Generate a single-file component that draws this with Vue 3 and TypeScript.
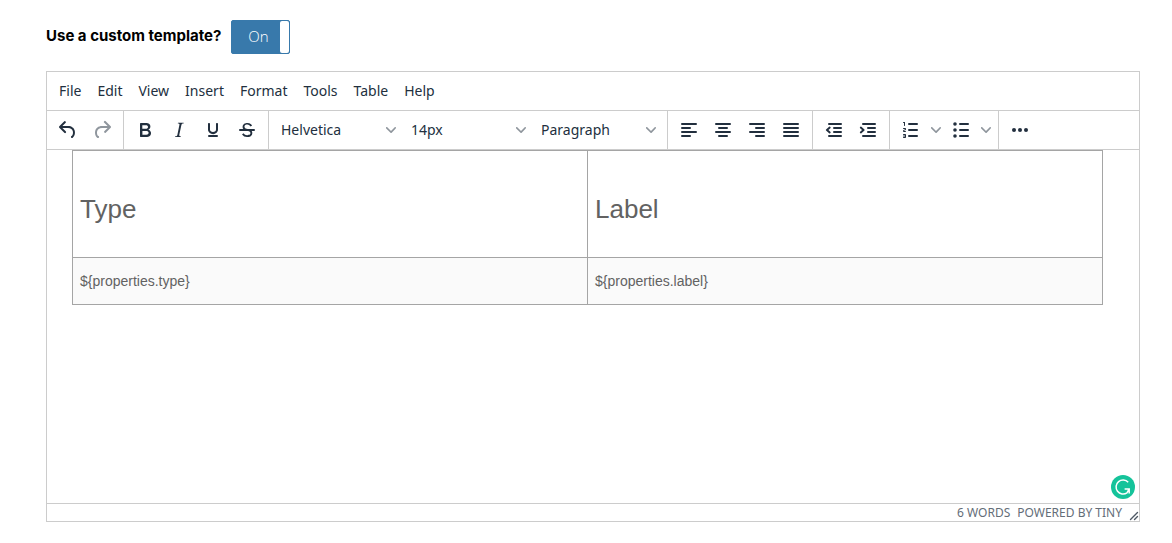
<script setup lang="ts">
import { ref } from 'vue'

interface Tool { name: string; paths: string[]; disabled?: boolean; split?: boolean }
interface Choice { name: string; options: string[] }
interface Group { name: string; tools?: Tool[]; choices?: Choice[] }

const enabled = ref(true)
const menus = ['File', 'Edit', 'View', 'Insert', 'Format', 'Tools', 'Table', 'Help']
const chevron = 'M8.7 2.2c.3-.3.8-.3 1 0 .4.4.4.9 0 1.2L5.7 7.8c-.3.3-.9.3-1.2 0L.2 3.4a.8.8 0 010-1.2c.3-.3.8-.3 1.1 0L5 6l3.7-3.8z'

const bar = (x: number, y: number, w: number) =>
  `M${x + 1} ${y}h${w - 2}a1 1 0 010 2H${x + 1}a1 1 0 010-2z`
const dot = (x: number, y: number, r: number) =>
  `M${x - r} ${y}a${r} ${r} 0 10${2 * r} 0a${r} ${r} 0 10-${2 * r} 0z`

const groups: Group[] = [
  {
    name: 'History',
    tools: [
      { name: 'Undo', paths: ['M6.4 8H12c3.7 0 6.2 2 6.8 5.1.6 2.7-.4 5.6-2.3 6.8a1 1 0 01-1-1.8c1.1-.6 1.8-2.7 1.4-4.6-.5-2.1-2.1-3.5-4.9-3.5H6.4l3.3 3.3a1 1 0 11-1.4 1.4l-5-5a1 1 0 010-1.4l5-5a1 1 0 011.4 1.4L6.4 8z'] },
      { name: 'Redo', disabled: true, paths: ['M17.6 10H12c-2.8 0-4.4 1.4-4.9 3.5-.4 2 .3 4 1.4 4.6a1 1 0 11-1 1.8c-2-1.2-2.9-4.1-2.3-6.8.6-3 3-5.1 6.8-5.1h5.6l-3.3-3.3a1 1 0 111.4-1.4l5 5a1 1 0 010 1.4l-5 5a1 1 0 01-1.4-1.4l3.3-3.3z'] },
    ],
  },
  {
    name: 'Formatting',
    tools: [
      { name: 'Bold', paths: ['M7.8 19c-.3 0-.5 0-.6-.2l-.2-.5V5.7c0-.2 0-.4.2-.5l.6-.2h5c1.5 0 2.7.3 3.5 1 .7.6 1.1 1.4 1.1 2.5a3 3 0 01-.6 1.9c-.4.6-1 1-1.6 1.2.4.1.9.3 1.3.6s.8.7 1 1.2c.4.4.5 1 .5 1.6 0 1.3-.4 2.3-1.3 3-.8.7-2.1 1-3.8 1H7.8zm5-8.3c.6 0 1.2-.1 1.6-.5.4-.3.6-.7.6-1.3 0-1.1-.8-1.7-2.3-1.7H9.3v3.5h3.4zm.5 6c.7 0 1.3-.1 1.7-.4.4-.4.6-.9.6-1.5s-.2-1-.7-1.4c-.4-.3-1-.4-2-.4H9.4v3.8h4z'] },
      { name: 'Italic', paths: ['M16.7 4.7l-.1.9h-.3c-.6 0-1 0-1.4.3-.3.3-.4.6-.5 1.1l-2.1 9.8v.6c0 .5.4.8 1.4.8h.2l-.2.8H8l.2-.8h.2c1.1 0 1.8-.5 2-1.5l2-9.8.1-.5c0-.6-.4-.8-1.4-.8h-.3l.2-.9h5.8z'] },
      { name: 'Underline', paths: ['M16 5c.6 0 1 .4 1 1v5.5a4 4 0 01-.4 1.8l-1 1.4a5.3 5.3 0 01-5.5 1 5 5 0 01-1.6-1c-.5-.4-.8-.9-1.1-1.4a4 4 0 01-.4-1.8V6c0-.6.4-1 1-1s1 .4 1 1v5.5c0 .3 0 .6.2 1l.6.7a3.3 3.3 0 002.2.8 3.4 3.4 0 002.2-.8c.3-.2.4-.5.6-.8l.2-.9V6c0-.6.4-1 1-1z', bar(7, 17, 10)] },
      { name: 'Strikethrough', paths: ['M15.6 8.5c-.5-.7-1-1.1-1.3-1.3-.6-.4-1.3-.6-2-.6-2.7 0-2.8 1.7-2.8 2.1 0 1.6 1.8 2 3.2 2.3 4.4.9 4.6 2.8 4.6 3.9 0 1.4-.7 4.1-5 4.1A6.2 6.2 0 017 16.4l1.5-1.1c.4.6 1.6 2 3.7 2 1.6 0 2.5-.4 3-1.2.4-.8.3-2-.8-2.6-.7-.4-1.6-.7-2.9-1-1-.2-3.9-.8-3.9-3.6C7.6 6 10.3 5 12.4 5c2.9 0 4.2 1.6 4.7 2.4l-1.5 1.1z', bar(4, 11, 16)] },
    ],
  },
  {
    name: 'Styles',
    choices: [
      { name: 'Font', options: ['Helvetica', 'Arial', 'Georgia'] },
      { name: 'Font size', options: ['14px', '16px', '18px'] },
      { name: 'Block', options: ['Paragraph', 'Heading 1', 'Heading 2'] },
    ],
  },
  {
    name: 'Alignment',
    tools: [
      { name: 'Align left', paths: [bar(4, 5, 16), bar(4, 9, 10), bar(4, 13, 16), bar(4, 17, 10)] },
      { name: 'Align center', paths: [bar(4, 5, 16), bar(7, 9, 10), bar(4, 13, 16), bar(7, 17, 10)] },
      { name: 'Align right', paths: [bar(4, 5, 16), bar(10, 9, 10), bar(4, 13, 16), bar(10, 17, 10)] },
      { name: 'Justify', paths: [bar(4, 5, 16), bar(4, 9, 16), bar(4, 13, 16), bar(4, 17, 16)] },
    ],
  },
  {
    name: 'Indentation',
    tools: [
      { name: 'Decrease indent', paths: [bar(6, 5, 14), bar(11, 9, 9), bar(11, 13, 9), bar(6, 17, 14), 'M6.4 12l2 1.8a1 1 0 01-1.3 1.5L4.3 12.8a1 1 0 010-1.6l2.8-2.5a1 1 0 011.3 1.5L6.4 12z'] },
      { name: 'Increase indent', paths: [bar(6, 5, 14), bar(11, 9, 9), bar(11, 13, 9), bar(6, 17, 14), 'M6.1 12l-2-1.8a1 1 0 011.3-1.5l2.8 2.5a1 1 0 010 1.6l-2.8 2.5a1 1 0 01-1.3-1.5L6.1 12z'] },
    ],
  },
  {
    name: 'Lists',
    tools: [
      { name: 'Numbered list', split: true, paths: [bar(9, 5, 10), bar(9, 11, 10), bar(9, 17, 10), 'M6 4v3.5c0 .3-.2.5-.5.5a.5.5 0 01-.5-.5V5h-.5a.5.5 0 010-1H6zm-1 8.8l.2.2h1.3c.3 0 .5.2.5.5s-.2.5-.5.5H4.9a1 1 0 01-.9-1V13c0-.4.3-.8.6-1l1.2-.4.2-.3a.2.2 0 00-.2-.2H4.5a.5.5 0 01-.5-.5c0-.3.2-.5.5-.5h1.6c.5 0 .9.4.9 1v.1c0 .4-.3.8-.6 1l-1.2.4-.2.3zM7 17v2c0 .6-.4 1-1 1H4.5a.5.5 0 010-1h1.2c.2 0 .3-.1.3-.3 0-.2-.1-.3-.3-.3H4.4a.4.4 0 110-.8h1.3c.2 0 .3-.1.3-.3 0-.2-.1-.3-.3-.3H4.5a.5.5 0 110-1H6c.6 0 1 .4 1 1z'] },
      { name: 'Bullet list', split: true, paths: [bar(10, 5, 10), bar(10, 11, 10), bar(10, 17, 10), dot(6, 6, 1.8), dot(6, 12, 1.8), dot(6, 18, 1.8)] },
    ],
  },
  { name: 'More', tools: [{ name: 'More tools', paths: [dot(6, 12, 2), dot(12, 12, 2), dot(18, 12, 2)] }] },
]
</script>

<template>
  <main class="page">
    <div class="setting">
      <span id="template-label" class="setting-label">Use a custom template?</span>
      <button
        class="switch"
        type="button"
        role="switch"
        aria-labelledby="template-label"
        :aria-checked="enabled"
        @click="enabled = !enabled"
      >
        <span class="switch-text">{{ enabled ? 'On' : 'Off' }}</span>
        <span class="switch-handle"></span>
      </button>
    </div>

    <section class="editor" aria-label="Template editor">
      <nav class="menubar">
        <button v-for="menu in menus" :key="menu" class="menu" type="button">{{ menu }}</button>
      </nav>

      <div class="toolbar" role="toolbar" aria-label="Editing tools">
        <div v-for="group in groups" :key="group.name" class="group" role="group" :aria-label="group.name">
          <template v-for="tool in group.tools" :key="tool.name">
            <button class="tool" type="button" :aria-label="tool.name" :disabled="tool.disabled">
              <svg class="icon" viewBox="0 0 24 24" aria-hidden="true">
                <path v-for="(d, i) in tool.paths" :key="i" :d="d" fill-rule="evenodd" />
              </svg>
            </button>
            <button v-if="tool.split" class="split" type="button" :aria-label="tool.name + ' options'">
              <svg class="chevron" viewBox="0 0 10 10" aria-hidden="true"><path :d="chevron" /></svg>
            </button>
          </template>
          <label v-for="choice in group.choices" :key="choice.name" class="choice">
            <select class="choice-input" :aria-label="choice.name">
              <option v-for="option in choice.options" :key="option">{{ option }}</option>
            </select>
            <svg class="chevron" viewBox="0 0 10 10" aria-hidden="true"><path :d="chevron" /></svg>
          </label>
        </div>
      </div>

      <div class="content">
        <table class="properties">
          <thead>
            <tr><th scope="col">Type</th><th scope="col">Label</th></tr>
          </thead>
          <tbody>
            <tr><td>${properties.type}</td><td>${properties.label}</td></tr>
          </tbody>
        </table>
        <button class="checker" type="button" aria-label="Check writing">
          <svg viewBox="0 0 24 24" aria-hidden="true">
            <circle cx="12" cy="12" r="12" fill="#15c39a" />
            <path d="M17.2 7.2A7 7 0 1 0 16 17.8L18 14.2M13.6 14h4.6v4.6" fill="none" stroke="#fff" stroke-width="1.5" />
          </svg>
        </button>
      </div>

      <footer class="status">
        <span>6 WORDS</span>
        <a class="brand" href="#">POWERED BY TINY</a>
        <svg class="resize" viewBox="0 0 10 10" aria-hidden="true">
          <path d="M1.5 8.5l7-7M5.5 8.5l3-3" />
        </svg>
      </footer>
    </section>
  </main>
</template>

<style>
body {
  margin: 0;
  background: #fff;
}
</style>

<style scoped>
.page {
  box-sizing: border-box;
  min-height: 100vh;
  padding: 20px 32px 21px 46px;
  display: flex;
  flex-direction: column;
  gap: 17px;
  color: #222f3e;
  font-family: "Noto Sans", "Open Sans", sans-serif;
  font-size: 14px;
}

button,
select {
  margin: 0;
  padding: 0;
  border: 0;
  background: transparent;
  color: inherit;
  font: inherit;
}

.setting {
  display: flex;
  align-items: center;
  gap: 10px;
}

.setting-label {
  padding-bottom: 2px;
  color: #000;
  font-family: Inter, sans-serif;
  font-size: 15px;
  font-weight: 700;
  line-height: 32px;
}

.switch {
  display: flex;
  width: 59px;
  height: 34px;
  border: 1px solid #3879ab;
  border-radius: 2px;
  background: #3879ab;
}

.switch-text {
  flex: 1;
  padding-left: 4px;
  color: #fff;
  font-family: "Open Sans", sans-serif;
  font-size: 15px;
  font-weight: 300;
  line-height: 30px;
}

.switch-handle {
  width: 9px;
  align-self: stretch;
  border-radius: 2px;
  background: #fff;
}

.editor {
  flex: 1;
  display: flex;
  flex-direction: column;
  border: 1px solid #ccc;
}

.menubar {
  display: flex;
  padding: 0 4px;
  border-bottom: 1px solid #ccc;
}

.menu {
  height: 38px;
  padding: 0 8px 2px;
}

.toolbar {
  display: flex;
  border-bottom: 1px solid #ccc;
}

.group {
  display: flex;
  align-items: center;
  height: 38px;
  padding: 0 4px;
  border-right: 1px solid #ccc;
}

.group:last-child {
  border-right: 0;
}

.tool {
  display: grid;
  place-items: center;
  width: 34px;
  height: 34px;
}

.icon {
  width: 24px;
  height: 24px;
  fill: #222f3e;
}

.tool:disabled .icon {
  opacity: 0.5;
}

.split {
  display: grid;
  place-items: center;
  width: 16px;
  height: 34px;
}

.chevron {
  width: 10px;
  height: 10px;
  fill: #222f3e;
  opacity: 0.5;
}

.choice {
  display: grid;
  grid-template-columns: 1fr 25px;
  align-items: center;
  justify-items: start;
  width: 130px;
}

.choice .chevron {
  grid-area: 1 / 2;
  margin-left: 8px;
  pointer-events: none;
}

.choice-input {
  grid-area: 1 / 1 / 2 / 3;
  width: 100%;
  height: 34px;
  padding: 0 8px 2px;
  appearance: none;
}

.content {
  position: relative;
  flex: 1;
  padding: 0 36px 0 25px;
}

.properties {
  width: 100%;
  table-layout: fixed;
  border-collapse: collapse;
  color: #626262;
  font-family: "Liberation Sans", Helvetica, Arial, sans-serif;
}

.properties th,
.properties td {
  padding: 0 7px;
  border: 1px solid #a5a5a5;
  text-align: left;
}

.properties th {
  height: 107px;
  padding-top: 10px;
  box-sizing: border-box;
  font-size: 26px;
  font-weight: 400;
}

.properties td {
  height: 46px;
  background: #fafafa;
}

.checker {
  position: absolute;
  right: 4px;
  bottom: 4px;
  width: 24px;
  height: 24px;
}

.checker svg {
  display: block;
}

.status {
  display: flex;
  align-items: center;
  justify-content: flex-end;
  height: 17px;
  border-top: 1px solid #ccc;
  color: #646d78;
  font-size: 12px;
  line-height: 17px;
}

.brand {
  margin-left: 7px;
  color: inherit;
  text-decoration: none;
}

.resize {
  align-self: flex-end;
  width: 10px;
  height: 10px;
  margin-left: 7px;
  fill: none;
  stroke: #4e5965;
  stroke-width: 1.4;
  stroke-linecap: round;
}
</style>
